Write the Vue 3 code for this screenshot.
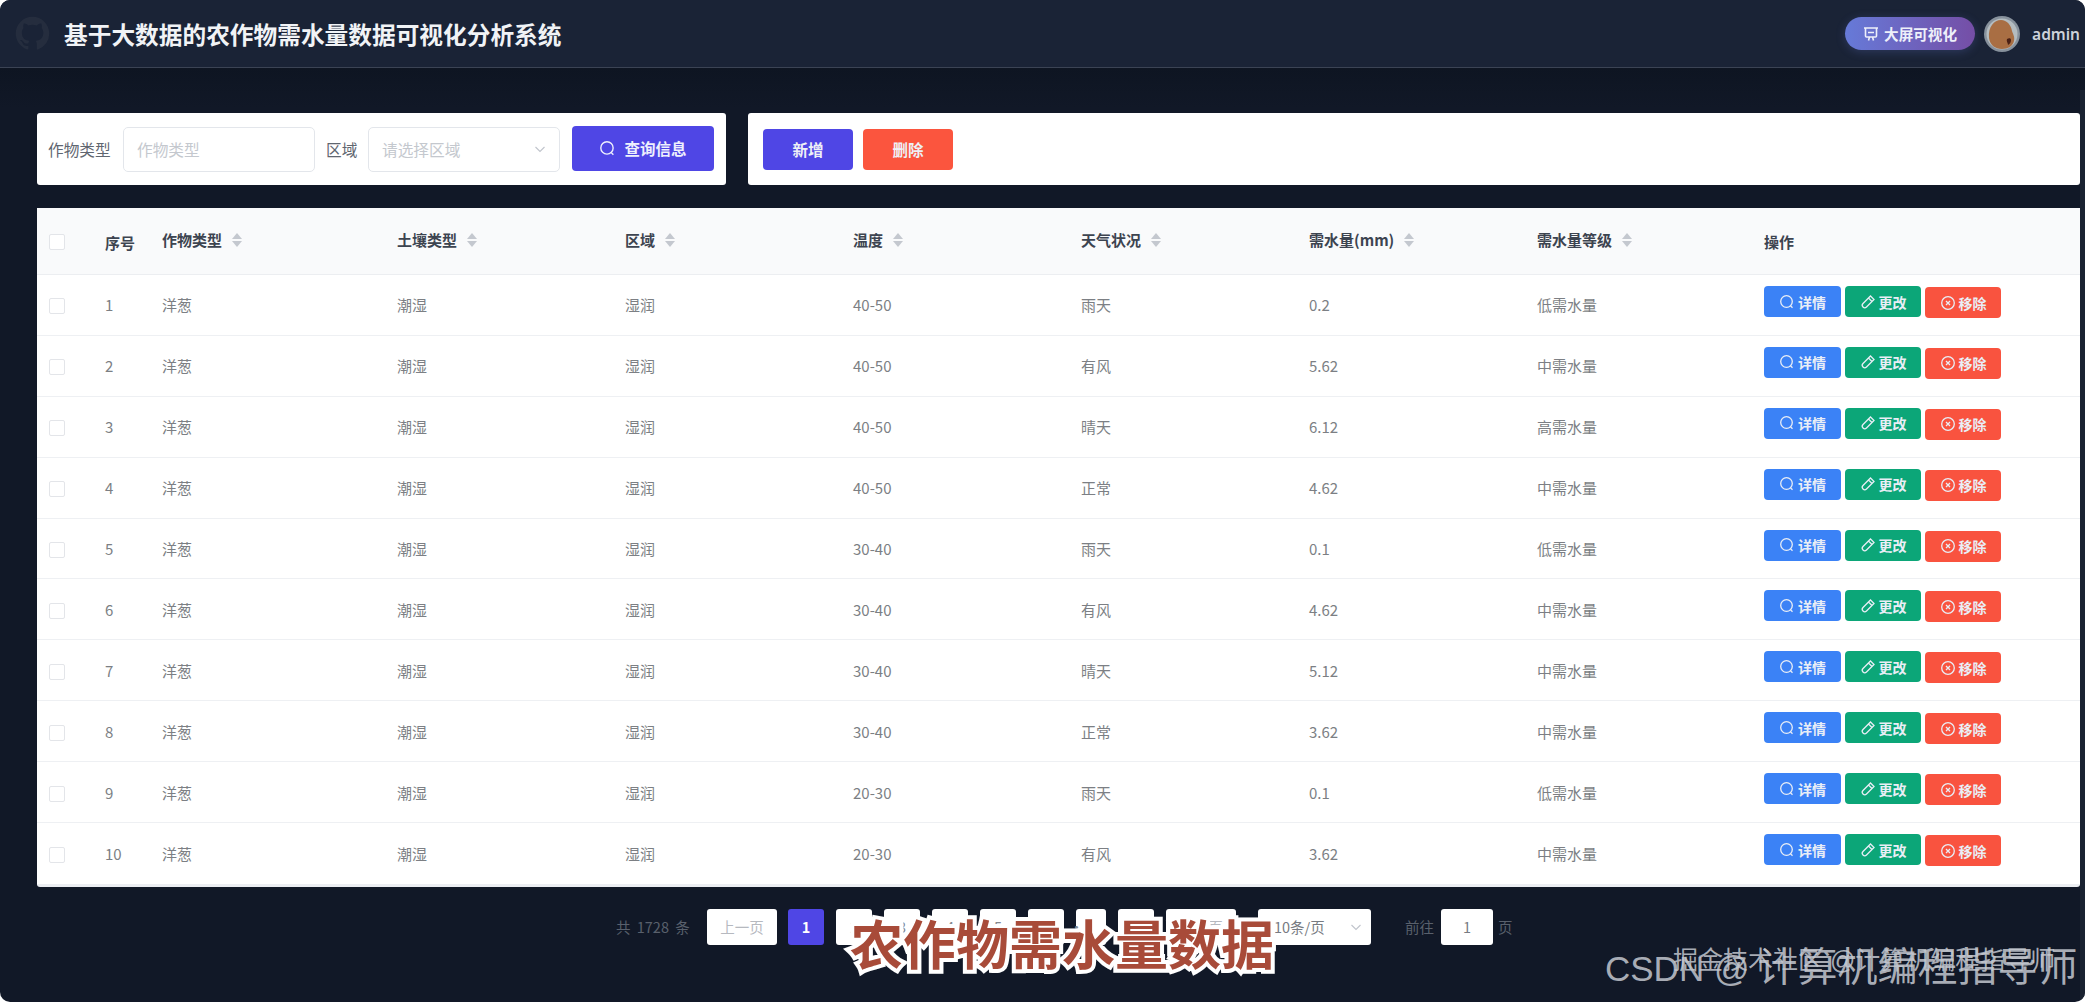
<template>
  <div class="shell">
    <header class="topbar">
      <div class="brand">
        <svg class="brand-logo" viewBox="0 0 24 24"><path d="M12 .5C5.65.5.5 5.65.5 12c0 5.08 3.29 9.39 7.86 10.91.58.11.79-.25.79-.56v-1.96c-3.2.7-3.87-1.54-3.87-1.54-.52-1.33-1.28-1.68-1.28-1.68-1.04-.71.08-.7.08-.7 1.16.08 1.77 1.19 1.77 1.19 1.03 1.76 2.7 1.25 3.36.96.1-.75.4-1.25.73-1.54-2.55-.29-5.24-1.28-5.24-5.69 0-1.26.45-2.28 1.19-3.09-.12-.29-.52-1.46.11-3.05 0 0 .97-.31 3.17 1.18a11 11 0 0 1 5.77 0c2.2-1.49 3.17-1.18 3.17-1.18.63 1.59.23 2.76.11 3.05.74.81 1.19 1.83 1.19 3.09 0 4.42-2.69 5.39-5.25 5.68.41.36.78 1.06.78 2.14v3.17c0 .31.21.67.8.55A11.5 11.5 0 0 0 23.5 12C23.5 5.65 18.35.5 12 .5z" /></svg>
        <h1 class="brand-title">基于大数据的农作物需水量数据可视化分析系统</h1>
      </div>
      <div class="top-right">
        <button class="screen-btn">
          <svg class="icon screen-icon" viewBox="0 0 16 16"><path d="M1 2h14M2.500 2v8a1 1 0 0 0 1 1h9a1 1 0 0 0 1-1V2M5.500 14.500l1-3.500M10.500 14.500l-1-3.500M5 6.500h6" /></svg>
          <span>大屏可视化</span>
        </button>
        <svg class="avatar" viewBox="0 0 36 36">
          <circle cx="18" cy="18" r="18" fill="#87919c" />
          <circle cx="18" cy="18" r="15.500" fill="#b4bcc0" />
          <path d="M5 22C4 11 10 4 17 4c6 0 10 5 11 11 1 3 3 6 2 10-1 5-6 8-12 8-7 0-12-4-13-11z" fill="#a96e43" />
          <path d="M23 23c2-1 4-1 4 1s-1 4-3 5c0-2-2-4-1-6z" fill="#4a2015" />
        </svg>
        <span class="username">admin</span>
      </div>
    </header>

    <main class="content">
      <div class="toolbar">
        <div class="card search-card">
          <label class="field-label">作物类型</label>
          <div class="input"><span class="placeholder">作物类型</span></div>
          <label class="field-label region-label">区域</label>
          <div class="input">
            <span class="placeholder">请选择区域</span>
            <svg class="chevron" viewBox="0 0 12 12"><path d="M1.500 4l4.500 4.500L10.500 4" /></svg>
          </div>
          <button class="btn-query">
            <svg class="icon query-icon" viewBox="0 0 16 16"><circle cx="7.500" cy="7.500" r="5.800" /><path d="M11.500 11.800l2 2" /></svg>
            <span>查询信息</span>
          </button>
        </div>
        <div class="card action-card">
          <button class="btn-big primary">新增</button>
          <button class="btn-big danger">删除</button>
        </div>
      </div>

      <div class="table">
        <div class="row head">
          <div class="cell check-cell"><span class="checkbox"></span></div>
          <div class="cell index-head">序号</div>
          <div v-for="col in columns" :key="col" class="cell sort-cell">
            <span>{{ col }}</span>
            <span class="carets"><i class="up"></i><i class="down"></i></span>
          </div>
          <div class="cell">操作</div>
        </div>
        <div v-for="(item, i) in rows" :key="i" class="row body-row">
          <div class="cell check-cell"><span class="checkbox"></span></div>
          <div class="cell">{{ i + 1 }}</div>
          <div class="cell">洋葱</div>
          <div class="cell">潮湿</div>
          <div class="cell">湿润</div>
          <div class="cell">{{ item[0] }}</div>
          <div class="cell">{{ item[1] }}</div>
          <div class="cell">{{ item[2] }}</div>
          <div class="cell">{{ item[3] }}</div>
          <div class="cell ops">
            <button class="btn-op blue">
              <svg class="icon" viewBox="0 0 16 16"><circle cx="7.500" cy="7.500" r="5.800" /><path d="M11.500 11.800l2 2" /></svg>详情
            </button>
            <button class="btn-op green">
              <svg class="icon" viewBox="0 0 16 16"><path d="M10.500 2l3.500 3.500-7.500 7.500a2.500 2.500 0 0 1-3.500 0 2.500 2.500 0 0 1 0-3.500zM8.500 4l3.500 3.500" /></svg>更改
            </button>
            <button class="btn-op red">
              <svg class="icon" viewBox="0 0 16 16"><circle cx="8" cy="8" r="6.300" /><path d="M6 6l4 4M10 6l-4 4" /></svg>移除
            </button>
          </div>
        </div>
      </div>

      <nav class="pager">
        <span class="total">共 1728 条</span>
        <span class="page-btn wide first">上一页</span>
        <span class="page-btn current">1</span>
        <span v-for="n in [2, 3, 4, 5, 6]" :key="n" class="page-btn">{{ n }}</span>
        <span class="page-btn more">···</span>
        <span class="page-btn">173</span>
        <span class="page-btn wide">下一页</span>
        <span class="page-btn size">
          <span>10条/页</span>
          <svg class="chevron" viewBox="0 0 12 12"><path d="M1.500 4l4.500 4.500L10.500 4" /></svg>
        </span>
        <span class="goto">前往</span>
        <span class="page-btn goto-input">1</span>
        <span class="goto-end">页</span>
      </nav>
    </main>

    <div class="scroll-track"></div>
    <div class="subtitle">农作物需水量数据</div>
    <div class="mark mark-csdn">CSDN @<span class="mark-name">计算机编程指导师</span></div>
    <div class="mark mark-juejin">掘金技术社区 @计算机编程指导师</div>
  </div>
</template>

<script setup>
const columns = ['作物类型', '土壤类型', '区域', '温度', '天气状况', '需水量(mm)', '需水量等级']

// temperature, weather, water need, level
const rows = [
  ['40-50', '雨天', '0.2', '低需水量'],
  ['40-50', '有风', '5.62', '中需水量'],
  ['40-50', '晴天', '6.12', '高需水量'],
  ['40-50', '正常', '4.62', '中需水量'],
  ['30-40', '雨天', '0.1', '低需水量'],
  ['30-40', '有风', '4.62', '中需水量'],
  ['30-40', '晴天', '5.12', '中需水量'],
  ['30-40', '正常', '3.62', '中需水量'],
  ['20-30', '雨天', '0.1', '低需水量'],
  ['20-30', '有风', '3.62', '中需水量']
]
</script>

<style>
html, body { margin: 0; background: #fff; }
</style>

<style scoped>
.shell {
  position: relative;
  width: 2085px;
  height: 1002px;
  overflow: hidden;
  border-radius: 10px;
  background: #111827;
  font-family: "Noto Sans CJK SC", "Noto Sans", sans-serif;
  color: #6f7680;
}

button { font-family: inherit; border: none; cursor: pointer; }

.icon {
  width: 16px;
  height: 16px;
  fill: none;
  stroke: currentColor;
  stroke-width: 1.3;
  flex-shrink: 0;
}

/* Top bar */
.topbar {
  height: 67px;
  box-sizing: content-box;
  display: flex;
  align-items: center;
  justify-content: space-between;
  padding: 0 5px 0 15px;
  background: #1a2336;
  border-top: 1px solid #6d7686;
  border-bottom: 1px solid #3b4354;
  margin-top: -1px;
}
.brand { display: flex; align-items: center; gap: 14px; }
.brand-logo { width: 35px; height: 35px; fill: #252d3e; }
.brand-title {
  margin: 0;
  font-size: 23.700px;
  font-weight: 700;
  color: #f1f3f6;
  white-space: nowrap;
}
.top-right { display: flex; align-items: center; }
.screen-btn {
  width: 130px;
  height: 33px;
  display: flex;
  align-items: center;
  justify-content: center;
  gap: 5px;
  border-radius: 17px;
  background: linear-gradient(90deg, #667ad8, #754ea6);
  box-shadow: 0 2px 10px rgba(102, 122, 216, 0.25);
  color: #eef0fa;
  font-size: 14.600px;
  font-weight: 700;
}
.screen-icon { stroke-width: 1.6; }
.avatar { width: 36px; height: 36px; margin-left: 9px; }
.username {
  margin-left: 12px;
  font-family: "Noto Sans", sans-serif;
  font-size: 15.500px;
  font-weight: 600;
  color: #cdd2da;
}

/* Content */
.content {
  padding: 45px 5px 0 37px;
  background: linear-gradient(180deg, #0e1522 0, #111827 40px);
}
.toolbar { display: flex; gap: 22px; }
.card {
  height: 72px;
  box-sizing: border-box;
  background: #fff;
  border-radius: 3px;
  display: flex;
  align-items: center;
}
.search-card { width: 689px; padding-left: 11px; flex-shrink: 0; }
.field-label { font-size: 15.700px; color: #5f6670; white-space: nowrap; }
.search-card .field-label { width: 75px; }
.search-card .region-label { width: 32px; margin: 0 10px 0 11px; }
.input {
  width: 192px;
  height: 45px;
  box-sizing: border-box;
  border: 1px solid #e3e6eb;
  border-radius: 5px;
  padding: 0 13px;
  display: flex;
  align-items: center;
  justify-content: space-between;
}
.placeholder { font-size: 15.700px; color: #c4c8ce; }
.chevron {
  width: 12px;
  height: 12px;
  fill: none;
  stroke: #c0c4cc;
  stroke-width: 1.1;
}
.btn-query {
  width: 142px;
  height: 45px;
  margin-left: 12px;
  margin-top: -2px;
  border-radius: 4px;
  background: #4f46e5;
  color: #eef0fd;
  font-size: 15.500px;
  font-weight: 700;
  display: flex;
  align-items: center;
  justify-content: center;
  gap: 8px;
}
.query-icon { width: 17px; height: 17px; }
.action-card { flex: 1; padding-left: 15px; gap: 10px; }
.btn-big {
  width: 90px;
  height: 41px;
  border-radius: 4px;
  color: #eef0f6;
  font-size: 15.500px;
  font-weight: 700;
}
.primary { background: #4f46e5; }
.danger { background: #fb553e; }

/* Table */
.table {
  margin-top: 23px;
  background: #fff;
  border-bottom: 3px solid #eceef2;
  border-radius: 3px;
}
.row {
  display: grid;
  grid-template-columns: 68px 57px 235px 228px 228px 228px 228px 228px 227px 1fr;
  align-items: center;
  font-size: 15px;
}
.head {
  height: 67px;
  background: #f9fafb;
  border-bottom: 1px solid #eceef1;
  box-sizing: border-box;
  color: #3d4450;
  font-weight: 700;
}
.body-row {
  height: 60.900px;
  box-sizing: border-box;
  border-bottom: 1px solid #eef0f3;
  color: #7c7f84;
}
.body-row:last-child { border-bottom: none; }
.cell { white-space: nowrap; }
.check-cell { padding-left: 12px; line-height: 0; }
.head .check-cell { padding-top: 2px; }
.body-row .check-cell { padding-top: 3px; }
.index-head { padding-top: 3px; }
.checkbox {
  display: inline-block;
  width: 16px;
  height: 16px;
  box-sizing: border-box;
  border: 1px solid #e3e5e9;
  border-radius: 2px;
  background: #fff;
}
.sort-cell { display: flex; align-items: center; gap: 10px; margin-top: -3px; }
.carets { display: flex; flex-direction: column; gap: 2px; }
.carets i {
  display: block;
  width: 0;
  height: 0;
  border-left: 5px solid transparent;
  border-right: 5px solid transparent;
}
.carets .up { border-bottom: 6px solid #c4c8cf; }
.carets .down { border-top: 6px solid #c4c8cf; }

.ops { display: flex; align-items: flex-start; gap: 4px; align-self: start; padding-top: 11px; }
.btn-op {
  width: 76px;
  height: 31px;
  padding: 0;
  border-radius: 4px;
  color: #e9eef6;
  font-size: 14px;
  font-weight: 700;
  display: flex;
  align-items: center;
  justify-content: center;
  gap: 3px;
}
.blue { background: #3b82f6; width: 77px; }
.green { background: #0ca678; }
.red { background: #f9533f; margin-top: 1px; }

/* Pagination */
.pager {
  margin-top: 22px;
  padding-left: 579px;
  display: flex;
  align-items: center;
  gap: 12px;
  font-size: 14.500px;
  color: #59606c;
}
.total { width: 79px; word-spacing: 3px; }
.page-btn {
  width: 36px;
  height: 36px;
  box-sizing: border-box;
  background: #fff;
  border-radius: 3px;
  color: #84888f;
  display: flex;
  align-items: center;
  justify-content: center;
}
.wide { width: 70px; color: #b6b9bf; }
.first { margin-right: -1px; }
.current { background: #4f46e5; color: #fff; font-weight: 700; }
.more { width: 30px; }
.size {
  width: 113px;
  margin-left: 10px;
  justify-content: space-between;
  padding: 0 9px 0 16px;
  color: #777b82;
}
.goto { margin-left: 22px; margin-right: -5px; }
.goto-input { width: 52px; color: #777b82; }
.goto-end { margin-left: -7px; }

/* Video overlays */
.scroll-track {
  position: absolute;
  top: 90px;
  right: 0;
  bottom: 0;
  width: 5px;
  background: #1a2231;
}
.subtitle {
  position: absolute;
  left: 850px;
  top: 904px;
  font-size: 53px;
  line-height: 76px;
  font-weight: 700;
  color: #a84b39;
  -webkit-text-stroke: 8px #fff;
  paint-order: stroke fill;
  white-space: nowrap;
}
.mark {
  position: absolute;
  white-space: nowrap;
  font-family: "Liberation Sans", "Noto Sans CJK SC", sans-serif;
  font-weight: 400;
  color: rgba(196, 200, 208, 0.85);
}
.mark-csdn { left: 1605px; top: 944px; font-size: 35px; line-height: 46px; }
.mark-name { font-size: 40px; margin-left: 8px; }
.mark-juejin { left: 1673px; top: 942px; font-size: 25px; line-height: 36px; }
</style>
